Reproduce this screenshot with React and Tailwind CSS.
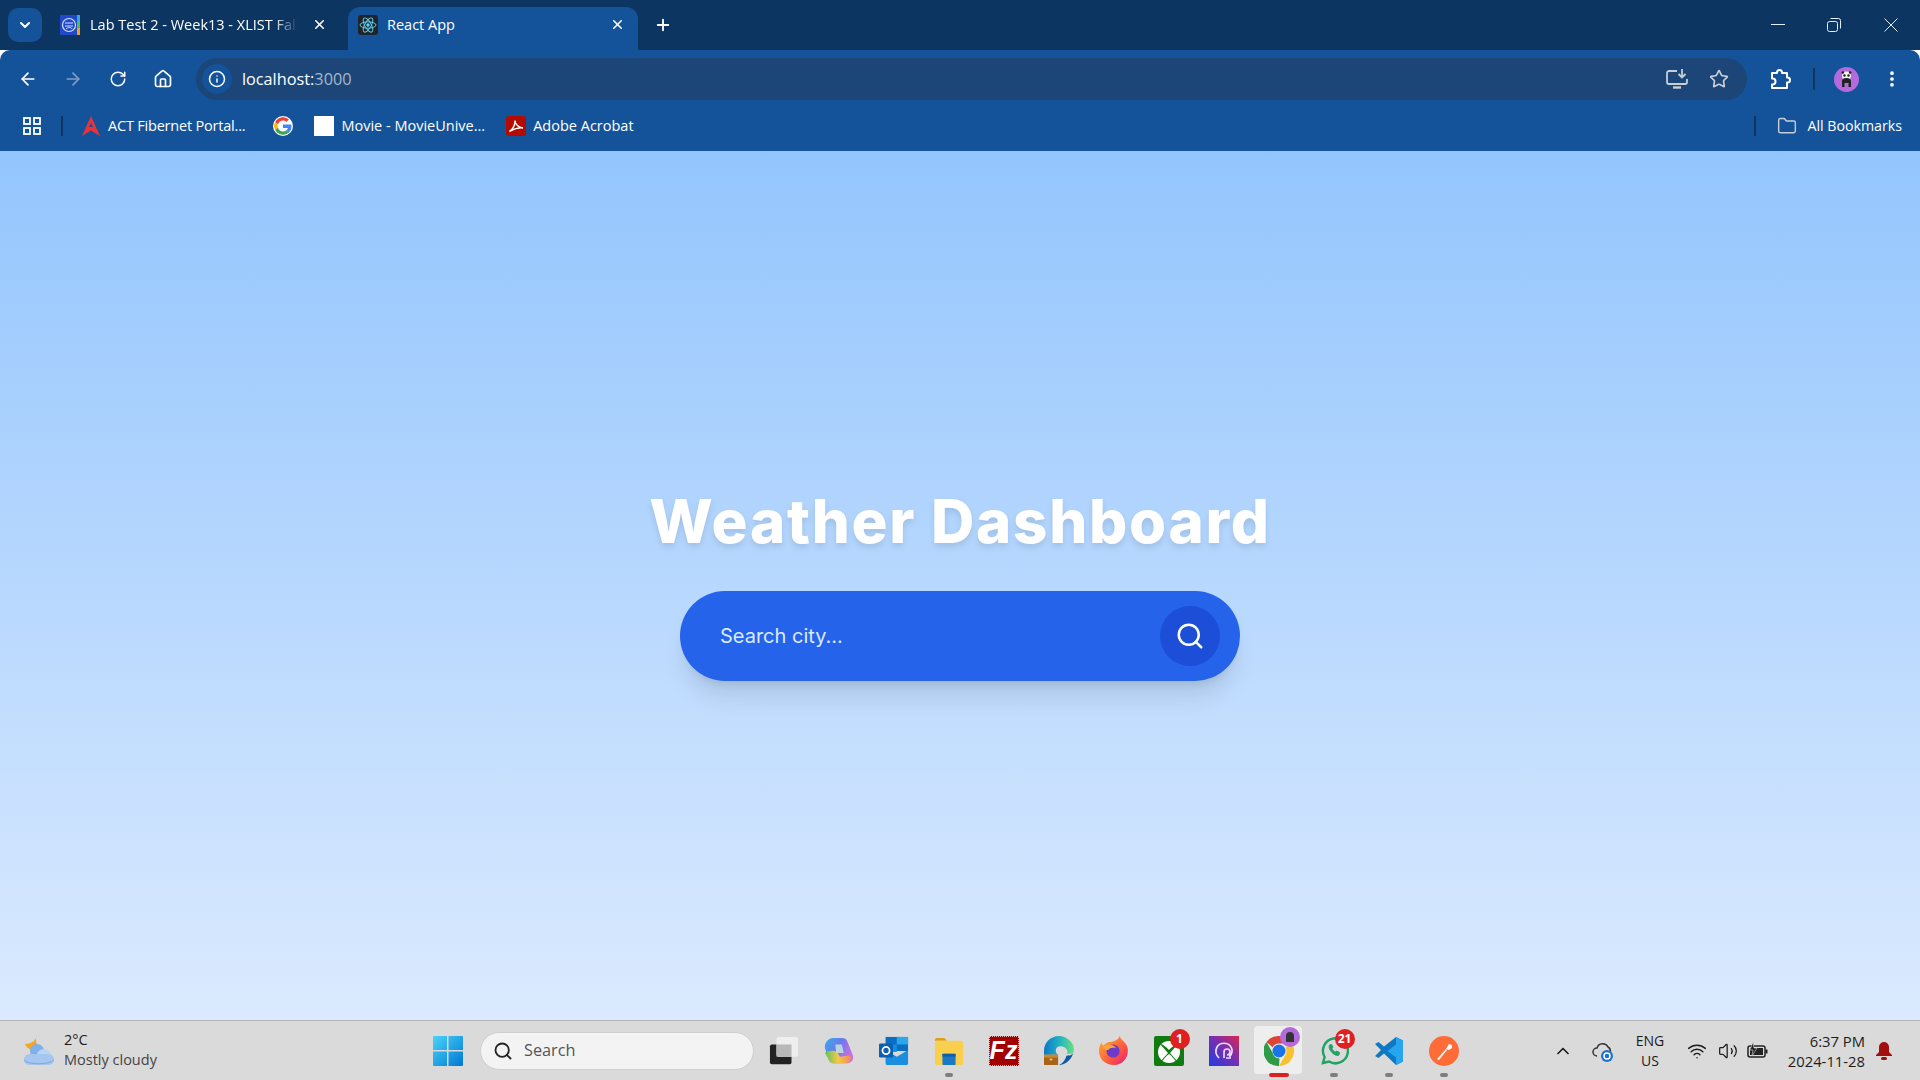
import React from "react";
import { ChevronDown, X, Plus, ArrowLeft, ArrowRight, RotateCw, Home, Info, Star, MoreVertical, Folder, Search, ChevronUp, Wifi, Volume2 } from "lucide-react";

const ui = { fontFamily: '"Open Sans","Noto Sans",sans-serif' };

function ReactLogo() {
  return (
    <svg width="20" height="20" viewBox="0 0 20 20" className="shrink-0 rounded-[3px] bg-[#20232a]">
      <circle cx="10" cy="10" r="1.7" fill="#61dafb" />
      <g fill="none" stroke="#61dafb" strokeWidth="0.9">
        <ellipse cx="10" cy="10" rx="8" ry="3.2" />
        <ellipse cx="10" cy="10" rx="8" ry="3.2" transform="rotate(60 10 10)" />
        <ellipse cx="10" cy="10" rx="8" ry="3.2" transform="rotate(120 10 10)" />
      </g>
    </svg>
  );
}

function SchoolLogo() {
  return (
    <svg width="20" height="20" viewBox="0 0 20 20" className="shrink-0">
      <rect width="20" height="20" fill="#2148c8" />
      <rect x="17" width="3" height="6" fill="#35a6e8" />
      <rect x="17" y="6" width="3" height="7" fill="#4fc04f" />
      <rect x="17" y="13" width="3" height="7" fill="#f0a020" />
      <circle cx="9" cy="10" r="6.5" fill="none" stroke="#cfe0ff" strokeWidth="1.2" />
      <path d="M5 8h8M5 11h8M6 14c2-2 5-2 6 0" stroke="#cfe0ff" strokeWidth="1" fill="none" />
    </svg>
  );
}

function GoogleLogo({ size = 20 }) {
  return (
    <svg width={size} height={size} viewBox="0 0 48 48" className="shrink-0 rounded-full bg-white p-[1px]">
      <path fill="#EA4335" d="M24 9.5c3.5 0 6.7 1.2 9.2 3.6l6.9-6.9C35.9 2.400 30.500 0 24 0 14.600 0 6.500 5.400 2.600 13.200l8 6.200C12.500 13.700 17.800 9.500 24 9.500z" />
      <path fill="#4285F4" d="M46.900 24.500c0-1.600-.1-3.100-.4-4.500H24v9h12.900c-.6 3-2.200 5.500-4.700 7.200l7.700 6c4.500-4.200 7-10.300 7-17.700z" />
      <path fill="#FBBC05" d="M10.500 28.600A14.500 14.500 0 0 1 10.500 19.400l-8-6.200a24 24 0 0 0 0 21.600l8-6.200z" />
      <path fill="#34A853" d="M24 48c6.500 0 11.900-2.100 15.900-5.800l-7.700-6c-2.200 1.400-5 2.300-8.200 2.300-6.200 0-11.500-4.200-13.400-9.900l-8 6.200C6.500 42.600 14.600 48 24 48z" />
    </svg>
  );
}

function AppsGrid() {
  return (
    <svg width="20" height="20" viewBox="0 0 20 20" fill="none" stroke="#fff" strokeWidth="1.8" className="shrink-0">
      <rect x="2" y="2" width="6" height="6" />
      <rect x="12" y="2" width="6" height="6" />
      <rect x="2" y="12" width="6" height="6" />
      <rect x="12" y="12" width="6" height="6" />
    </svg>
  );
}

function ActLogo() {
  return (
    <svg width="20" height="20" viewBox="0 0 20 20" className="shrink-0">
      <path d="M10 0 19 20 10 14.500 1 20Z" fill="#e8323c" />
      <path d="M8 11h4L10 7Z" fill="#14539a" />
    </svg>
  );
}

function AcrobatLogo() {
  return (
    <svg width="20" height="20" viewBox="0 0 20 20" className="shrink-0">
      <rect width="20" height="20" rx="3" fill="#b30b00" />
      <path d="M3.500 15.500c3-1.500 6-7 5.500-11 0 3 3 7 8 7.500-4-.5-9 .5-13.500 3.500Z" fill="none" stroke="#fff" strokeWidth="1.4" />
    </svg>
  );
}

function Avatar() {
  return (
    <svg width="25" height="25" viewBox="0 0 25 25" className="shrink-0">
      <circle cx="12.500" cy="12.500" r="12.500" fill="#b36bdc" />
      <circle cx="12.500" cy="9" r="4.500" fill="#f2f2f2" />
      <circle cx="10.500" cy="8.500" r="1.200" fill="#222" />
      <circle cx="14.500" cy="8.500" r="1.200" fill="#222" />
      <circle cx="8.800" cy="5.500" r="1.300" fill="#222" />
      <circle cx="16.200" cy="5.500" r="1.300" fill="#222" />
      <path d="M8 20v-6a4.500 3 0 0 1 9 0v6h-2.500v-4h-4v4Z" fill="#222" />
    </svg>
  );
}

function ExtensionIcon() {
  return (
    <svg width="22" height="22" viewBox="0 0 22 22" fill="none" stroke="#fff" strokeWidth="2" strokeLinejoin="round" className="shrink-0">
      <path d="M2 5h5V4.500a2.500 2.500 0 0 1 5 0V5h5v4.500h.5a2.500 2.500 0 0 1 0 5H17V20H2v-3.500h.5a3 3 0 0 0 0-6H2Z" />
    </svg>
  );
}

function MonitorIcon() {
  return (
    <svg width="22" height="20" viewBox="0 0 22 20" fill="none" stroke="#c6ced8" strokeWidth="1.800" className="shrink-0 ml-auto">
      <path d="M11 2H3a2 2 0 0 0-2 2v9a2 2 0 0 0 2 2h16a2 2 0 0 0 2-2v-3" />
      <path d="M7 18.500h8" strokeWidth="2.400" />
      <path d="M16 0v8M12.500 5l3.500 3.500L19.500 5" />
    </svg>
  );
}

function WeatherIcon() {
  return (
    <svg width="32" height="34" viewBox="0 0 32 34" className="shrink-0">
      <path d="M14 1c-2 5-1 9 3 13l-9 2c-2-1-5-3-6-6 6 0 11-3 12-9Z" fill="#f5a623" />
      <circle cx="14" cy="17" r="7" fill="#7fb0ea" />
      <ellipse cx="21" cy="21" rx="7" ry="6" fill="#b9d4f4" />
      <rect x="1" y="20" width="30" height="11" rx="5.500" fill="#a5c6ee" />
      <path d="M1 26c3 5 26 5 30 0" stroke="#7fa6de" fill="none" />
    </svg>
  );
}

function StartLogo() {
  return (
    <svg width="30" height="30" viewBox="0 0 30 30" className="shrink-0">
      <defs>
        <linearGradient id="st" x1="0" y1="0" x2="1" y2="1">
          <stop offset="0" stopColor="#4ad3f9" />
          <stop offset="1" stopColor="#0078d4" />
        </linearGradient>
      </defs>
      <path fill="url(#st)" d="M0 1a1 1 0 0 1 1-1h13v14H0ZM15.500 0H29a1 1 0 0 1 1 1v13H15.500ZM0 15.500h14V30H1a1 1 0 0 1-1-1ZM15.500 15.500H30V29a1 1 0 0 1-1 1H15.500Z" />
    </svg>
  );
}

const TaskView = () => (
  <svg width="32" height="32" viewBox="0 0 32 32">
    <rect x="1" y="9" width="23" height="21" rx="2" fill="#222" />
    <rect x="8" y="1" width="23" height="21" rx="2" fill="#eee" />
    <rect x="8" y="9" width="16" height="13" fill="#b8b8b8" />
  </svg>
);
const Copilot = () => (
  <svg width="32" height="32" viewBox="0 0 32 32">
    <defs>
      <linearGradient id="cp" x1="0" y1="0" x2="1" y2="0.6">
        <stop offset="0" stopColor="#2fb0e8" />
        <stop offset=".5" stopColor="#6f78ee" />
        <stop offset="1" stopColor="#d070e0" />
      </linearGradient>
      <linearGradient id="cp2" x1="0" y1="0" x2="1" y2="0">
        <stop offset="0" stopColor="#5cc45a" />
        <stop offset=".5" stopColor="#f6c945" />
        <stop offset="1" stopColor="#f08a5a" />
      </linearGradient>
    </defs>
    <path fill="url(#cp)" d="M10 2h9c3 0 5 1 6 4l6 15c1 4-2 8-6 8H10c-3 0-4-2-5-4L1 13C0 7 5 2 10 2Z" />
    <path fill="url(#cp2)" d="M1 18c3-3 10-3 13-1l3 5 9-1c2 0 3 1 3 3-1 3-3 5-6 5H10c-3 0-4-2-5-4Z" />
    <path fill="#bfe6dc" d="M12 9h7l2 9h-8Z" opacity=".85" />
  </svg>
);
const Outlook = () => (
  <svg width="32" height="32" viewBox="0 0 32 32">
    <rect x="7" y="1" width="24" height="15" fill="#0a6fc4" />
    <rect x="19" y="1" width="12" height="8" fill="#2ea6ea" />
    <rect x="7" y="9" width="12" height="8" fill="#1490df" />
    <path d="M7 15l12 7 12-7v14a2 2 0 0 1-2 2H9a2 2 0 0 1-2-2Z" fill="#1a8fe0" />
    <rect x="0" y="8" width="15" height="15" rx="1.500" fill="#0d5fb0" />
    <circle cx="7.500" cy="15.500" r="3.800" fill="none" stroke="#fff" strokeWidth="1.900" />
  </svg>
);
const FolderApp = () => (
  <svg width="32" height="32" viewBox="0 0 32 32">
    <path d="M1 4a2 2 0 0 1 2-2h8l3 3h-13Z" fill="#d9a00f" />
    <rect x="1" y="5" width="30" height="26" rx="2" fill="#fbcf4e" />
    <rect x="9" y="19" width="14" height="12" rx="1" fill="#1a78c8" />
    <rect x="9" y="19" width="14" height="3" fill="#0f5ea6" />
  </svg>
);
const FileZilla = () => (
  <div className="flex h-[30px] w-[30px] items-center justify-center bg-[#a30000] border border-dotted border-[#e8b0b0] text-[25px] font-bold italic leading-none text-white" style={{ fontFamily: '"Liberation Sans",sans-serif' }}>Fz</div>
);
const Edge = () => (
  <svg width="32" height="32" viewBox="0 0 32 32">
    <defs>
      <linearGradient id="ed" x1="0" y1="0.5" x2="1" y2="0.5"><stop offset="0" stopColor="#0c77c9" /><stop offset=".55" stopColor="#25b6c0" /><stop offset="1" stopColor="#6fe07c" /></linearGradient>
    </defs>
    <path d="M16 0C7 0 0 7 0 16v4h15c-3-2-3-6-1-8 3-2 8-1 10 2 2 2 1 4 0 5h7c1-2 1-4 1-6C31 6 24 0 16 0Z" fill="url(#ed)" />
    <path d="M31 19c-2 6-8 12-15 12 4-2 7-6 8-10 2 0 5 0 7-2Z" fill="#0c5aa6" />
    <rect x="0" y="20" width="15" height="11" rx="1" fill="#a8621a" />
    <rect x="0" y="20" width="15" height="3" fill="#c78a2c" />
    <rect x="6" y="24" width="3" height="2" fill="#f2c14e" />
  </svg>
);
const Firefox = () => (
  <svg width="32" height="32" viewBox="0 0 32 32">
    <defs>
      <linearGradient id="ff" x1="0" y1="0" x2="1" y2="1"><stop offset="0" stopColor="#ffb52e" /><stop offset=".6" stopColor="#ff5a3c" /><stop offset="1" stopColor="#e31587" /></linearGradient>
    </defs>
    <path d="M22 0c1 4 6 6 8 11 3 9-3 20-14 20C7 31 0 25 0 16c0-4 1-7 3-9 0 2 1 3 2 3 2-3 6-4 9-4 3-1 7-2 8-6Z" fill="url(#ff)" />
    <circle cx="15" cy="16" r="7" fill="#6d3bc8" />
    <path d="M4 13c2-4 7-5 11-3 2 1 3 2 3 3-4-1-7 0-8 2-2 0-4-1-6-2Z" fill="#ffa436" />
  </svg>
);
const Xbox = () => (
  <svg width="30" height="30" viewBox="0 0 30 30">
    <rect width="30" height="30" rx="2" fill="#107c10" />
    <circle cx="15" cy="16" r="11" fill="#fff" />
    <path d="M15 14c-3-3-6-6-9-6l8 9-8 9 1 1c2-3 5-7 8-9 3 2 6 6 8 9l1-1-8-9 8-9c-3 0-6 3-9 6Z" fill="#107c10" />
  </svg>
);
const Proton = () => (
  <svg width="30" height="30" viewBox="0 0 30 30">
    <defs>
      <linearGradient id="pr" x1="0" y1="1" x2="1" y2="0"><stop offset="0" stopColor="#1f3fe0" /><stop offset=".55" stopColor="#7a2eb0" /><stop offset="1" stopColor="#d9274f" /></linearGradient>
    </defs>
    <rect width="30" height="30" fill="url(#pr)" />
    <path d="M10 22c-3-3-4-7-2-11 3-5 11-5 14 0 2 3 1 7-1 9v2h-4M15 22v-6a3 3 0 1 1 3 3" fill="none" stroke="#e8dcff" strokeWidth="1.700" />
  </svg>
);
const ChromeIcon = () => (
  <svg width="30" height="30" viewBox="0 0 30 30">
    <path d="M15 0a15 15 0 0 1 13 7.500H15a7.500 7.500 0 0 0-6.500 3.750L2.500 6A15 15 0 0 1 15 0Z" fill="#db4437" />
    <path d="M28 7.500A15 15 0 0 1 15 30l6.500-11.250A7.500 7.500 0 0 0 21.500 11.250Z" fill="#fbc02d" />
    <path d="M15 30A15 15 0 0 1 2.500 6l6 10.500a7.500 7.500 0 0 0 7 6l-.5 7.500Z" fill="#2e9b46" />
    <circle cx="15" cy="15" r="6.500" fill="#1a73e8" />
  </svg>
);
const WhatsApp = () => (
  <svg width="30" height="30" viewBox="0 0 30 30" fill="none" stroke="#21a366" strokeWidth="2.500">
    <path d="M4 27l1.600-6A12.500 12.500 0 1 1 10 25.500Z" />
    <path d="M10.500 9c-1 2 0 5 2.500 7.500s5 3.500 7 2.500l.5-2.500-3-1.500-1 1.200c-1.500-.7-3-2.200-3.700-3.700l1.200-1-1.500-3Z" fill="#21a366" strokeWidth="1" />
  </svg>
);
const VSCode = () => (
  <svg width="30" height="30" viewBox="0 0 30 30">
    <path d="M22 1l7 3.500v21L22 29 10 17.500l-5.500 4.500L1 20l6-6-6-6 3.500-2L10 10.500Z" fill="#0e78c2" />
    <path d="M22 1l7 3.500v21L22 29Zm0 7.500L13.500 15 22 21.500Z" fill="#25a6ee" />
  </svg>
);
const Postman = () => (
  <svg width="30" height="30" viewBox="0 0 30 30">
    <circle cx="15" cy="15" r="15" fill="#ff6c37" />
    <path d="M8 23l9-10 1 1-8 10ZM17 13l3-5 3 1 0 3-3 2Z" fill="#fff" />
  </svg>
);

function Badge({ children }) {
  return (
    <span className="absolute -right-[6px] -top-[7px] flex h-[20px] min-w-[20px] items-center justify-center rounded-full bg-[#e02020] px-[3px] text-[12px] font-bold leading-none text-white">{children}</span>
  );
}

function TaskApp({ children, dot, badge }) {
  return (
    <div className="relative flex h-full w-[55px] items-center justify-center">
      <div className="relative flex h-[30px] w-[30px] items-center justify-center">
        {children}
        {badge && <Badge>{badge}</Badge>}
      </div>
      {dot && <span className="absolute bottom-[3px] left-1/2 h-[4px] w-[8px] -translate-x-1/2 rounded-full bg-[#7e7e7e]" />}
    </div>
  );
}

function Bookmark({ icon, label, className }) {
  return (
    <div className={`flex items-center gap-[7px] ${className}`}>
      {icon}
      {label && <span className="whitespace-nowrap text-[14.5px] text-white">{label}</span>}
    </div>
  );
}

export default function App() {
  return (
    <div className="flex h-screen w-full flex-col overflow-hidden" style={ui}>
      {/* Tab strip */}
      <div className="flex h-[50px] shrink-0 items-end bg-[#0d3562] pl-2">
        <div className="mb-2 flex h-[34px] w-[34px] items-center justify-center rounded-[10px] bg-[#14539a]">
          <ChevronDown size={16} strokeWidth={3} className="text-white" />
        </div>
        <div className="ml-[18px] flex h-[43px] w-[288px] items-center pb-[8px]">
          <SchoolLogo />
          <span className="ml-[10px] w-[208px] overflow-hidden whitespace-nowrap text-[14.5px] text-white [mask-image:linear-gradient(to_right,black_88%,transparent)]">Lab Test 2 - Week13 - XLIST Fall</span>
          <X size={15} strokeWidth={2.5} className="ml-[14px] text-white" />
        </div>
        <div className="flex h-[43px] w-[290px] items-center rounded-t-[12px] bg-[#14539a] pb-[8px] pl-[10px]">
          <ReactLogo />
          <span className="ml-[9px] w-[223px] whitespace-nowrap text-[14.5px] text-white">React App</span>
          <X size={15} strokeWidth={2.5} className="text-white" />
        </div>
        <div className="flex h-[43px] w-[50px] items-center justify-center pb-[8px]">
          <Plus size={18} strokeWidth={2.5} className="text-white" />
        </div>
        <div className="ml-auto flex h-full items-center pr-[22px] text-[#e6edf5]">
          <svg width="14" height="2" viewBox="0 0 14 2"><rect width="14" height="1" fill="currentColor" /></svg>
          <svg width="14" height="14" viewBox="0 0 14 14" fill="none" stroke="currentColor" className="ml-[42px]">
            <rect x="0.500" y="3.500" width="10" height="10" rx="2" />
            <path d="M3.500 0.500h8a2 2 0 0 1 2 2v8" />
          </svg>
          <svg width="14" height="14" viewBox="0 0 14 14" stroke="currentColor" className="ml-[43px]"><path d="M0.500 0.500l13 13M13.500 0.500l-13 13" /></svg>
        </div>
      </div>
      {/* Toolbar */}
      <div className="flex h-[51px] shrink-0 items-center rounded-t-[10px] bg-[#14539a] pl-[18px] pr-[18px] pb-[1px] pt-[8px]">
        <ArrowLeft size={20} strokeWidth={2} className="text-white" />
        <ArrowRight size={20} strokeWidth={2} className="ml-[25px] text-[#7f9fc6]" />
        <RotateCw size={18} strokeWidth={2} className="ml-[26px] text-white" />
        <Home size={20} strokeWidth={2} className="ml-[26px] text-white" />
        <div className="ml-[23px] flex h-[42px] w-[1554px] items-center rounded-full bg-[#1b4677] pl-[6px] pr-[18px]">
          <div className="flex h-[30px] w-[30px] items-center justify-center rounded-full bg-[#14539a]">
            <Info size={18} className="text-white" />
          </div>
          <span className="ml-[10px] text-[16.3px] text-white">localhost:<span className="text-[#a7b7cb]">3000</span></span>
          <MonitorIcon />
          <Star size={20} strokeWidth={2} className="ml-[21px] text-[#c6ced8]" />
        </div>
        <div className="ml-[23px]"><ExtensionIcon /></div>
        <span className="ml-[21px] h-[22px] w-[2px] bg-[#0d3562]" />
        <div className="ml-[19px]"><Avatar /></div>
        <MoreVertical size={20} strokeWidth={2.5} className="ml-[23px] text-white" />
      </div>
      {/* Bookmarks */}
      <div className="flex h-[50px] shrink-0 items-center bg-[#14539a] pl-[22px] pr-[18px]">
        <AppsGrid />
        <span className="ml-[19px] h-[20px] w-[2px] bg-[#0d3562]" />
        <Bookmark icon={<ActLogo />} label="ACT Fibernet Portal..." className="ml-[18px] tracking-[-0.2px]" />
        <Bookmark icon={<GoogleLogo />} className="ml-[28px]" />
        <Bookmark icon={<span className="h-[20px] w-[20px] bg-white" />} label="Movie - MovieUnive..." className="ml-[21px]" />
        <Bookmark icon={<AcrobatLogo />} label="Adobe Acrobat" className="ml-[21px]" />
        <span className="ml-auto h-[20px] w-[2px] bg-[#0d3562]" />
        <Folder size={20} strokeWidth={1.7} className="ml-[21px] text-[#c6ced8]" />
        <span className="ml-[10px] whitespace-nowrap text-[14.2px] text-white">All Bookmarks</span>
      </div>
      {/* Page */}
      <main className="flex min-h-0 flex-1 flex-col items-center justify-center bg-gradient-to-b from-[#93c5fd] to-[#dbeafe]">
        <h1 className="mb-10 text-6xl font-extrabold tracking-[1.7px] text-white [text-shadow:0_4px_6px_rgba(0,0,0,0.1)]" style={{ fontFamily: 'Inter,"Open Sans",sans-serif' }}>Weather Dashboard</h1>
        <div className="flex h-[90px] w-[560px] items-center rounded-full bg-[#2563eb] pl-10 pr-5 shadow-xl">
          <span className="flex-1 text-xl text-[#dbeafe]" style={{ fontFamily: 'Inter,"Open Sans",sans-serif' }}>Search city...</span>
          <button className="flex h-[60px] w-[60px] items-center justify-center rounded-full bg-[#1d4ed8] text-white">
            <Search size={30} strokeWidth={2} />
          </button>
        </div>
      </main>
      {/* Taskbar */}
      <div className="flex h-[60px] shrink-0 items-center border-t border-[#b4b4b4] bg-[#dadada] text-[#1c1c1c]">
        <div className="flex w-[433px] items-center pl-[23px]">
          <WeatherIcon />
          <div className="ml-[9px] pb-[2px] text-[14.5px] leading-[20px]">
            <div>2°C</div>
            <div className="text-[#444]">Mostly cloudy</div>
          </div>
        </div>
        <StartLogo />
        <div className="ml-[17px] flex h-[38px] w-[274px] items-center rounded-full border border-[#cfcfcf] bg-[#f3f3f3] pl-[12px]">
          <Search size={20} strokeWidth={2.2} className="text-[#222]" />
          <span className="ml-[11px] text-[16.3px] text-[#555]">Search</span>
        </div>
        <div className="ml-[2px] flex h-full items-center">
          <TaskApp><TaskView /></TaskApp>
          <TaskApp><Copilot /></TaskApp>
          <TaskApp><Outlook /></TaskApp>
          <TaskApp dot><FolderApp /></TaskApp>
          <TaskApp><FileZilla /></TaskApp>
          <TaskApp><Edge /></TaskApp>
          <TaskApp><Firefox /></TaskApp>
          <TaskApp badge="1"><Xbox /></TaskApp>
          <TaskApp><Proton /></TaskApp>
          <div className="relative flex h-full w-[55px] items-center justify-center">
            <div className="absolute left-[3px] top-[5px] h-[48px] w-[48px] rounded-[4px] bg-[#eeeeee]" />
            <div className="relative h-[30px] w-[30px]">
              <ChromeIcon />
              <span className="absolute -right-[6px] -top-[9px] flex h-[20px] w-[20px] items-center justify-center rounded-full bg-[#b36bdc]">
                <span className="h-[10px] w-[8px] rounded-t-full bg-[#333]" />
              </span>
            </div>
            <span className="absolute bottom-[3px] left-1/2 h-[4px] w-[20px] -translate-x-1/2 rounded-full bg-[#e02020]" />
          </div>
          <TaskApp dot badge="21"><WhatsApp /></TaskApp>
          <TaskApp dot><VSCode /></TaskApp>
          <TaskApp dot><Postman /></TaskApp>
        </div>
        <div className="ml-[82px] flex h-full items-center">
          <ChevronUp size={20} strokeWidth={2} />
          <svg width="24" height="22" viewBox="0 0 24 22" className="ml-[18px]">
            <path d="M6 16a4 4 0 0 1 0-8 6 6 0 0 1 11-1 5 5 0 0 1 2 6" fill="none" stroke="#333" strokeWidth="1.500" />
            <circle cx="16" cy="16" r="6" fill="#1a73d0" />
            <circle cx="16" cy="16" r="3" fill="none" stroke="#fff" strokeWidth="1.500" />
          </svg>
          <div className="ml-[17px] w-[36px] text-center text-[14px] leading-[20px]">
            <div>ENG</div>
            <div>US</div>
          </div>
          <Wifi size={20} strokeWidth={1.8} className="ml-[19px]" />
          <Volume2 size={20} strokeWidth={1.5} className="ml-[11px]" />
          <svg width="22" height="18" viewBox="0 0 22 18" className="ml-[9px]">
            <rect x="1" y="4" width="17" height="11" rx="2" fill="none" stroke="#222" strokeWidth="1.500" />
            <rect x="3" y="6" width="13" height="7" fill="#222" />
            <rect x="18.500" y="7.500" width="2" height="4" fill="#222" />
            <path d="M6 0 3 8h3l-1 6 5-8H7Z" fill="#222" stroke="#dadada" strokeWidth=".6" />
          </svg>
          <div className="ml-[6px] w-[90px] text-right text-[14.8px] leading-[20px]">
            <div>6:37 PM</div>
            <div>2024-11-28</div>
          </div>
          <svg width="18" height="20" viewBox="0 0 18 20" className="ml-[10px]">
            <path d="M9 1a5 5 0 0 1 5 5v5l3 3v1H1v-1l3-3V6a5 5 0 0 1 5-5Z" fill="#a30f0f" />
            <rect x="6" y="16" width="6" height="3" rx="1.500" fill="#a30f0f" />
          </svg>
        </div>
      </div>
    </div>
  );
}
